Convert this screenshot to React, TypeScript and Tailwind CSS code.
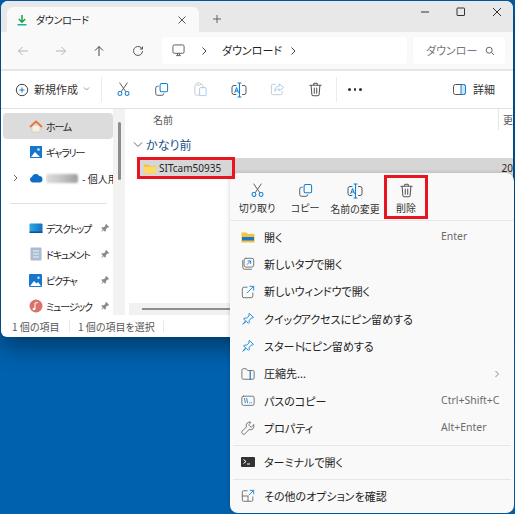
import React from "react";

const F = "[font-family:'Noto_Sans_CJK_JP','Noto_Sans',sans-serif] [font-feature-settings:'palt']";

function Ic({ children, size = 15, className = "" }: { children: React.ReactNode; size?: number; className?: string }) {
  return (
    <svg width={size} height={size} viewBox="0 0 16 16" fill="none" strokeLinecap="round" strokeLinejoin="round" className={"shrink-0 " + className}>
      {children}
    </svg>
  );
}

const Scissors = () => (
  <Ic>
    <path d="M4 1l6.200 9M12 1L5.800 10" stroke="#555" strokeWidth="1" />
    <circle cx="4.200" cy="12.300" r="2.100" stroke="#0f7fd6" strokeWidth="1.100" />
    <circle cx="11.800" cy="12.300" r="2.100" stroke="#0f7fd6" strokeWidth="1.100" />
  </Ic>
);
const Copy = () => (
  <Ic>
    <rect x="6.500" y="1.500" width="8" height="9" rx="1.800" stroke="#0f7fd6" strokeWidth="1.100" />
    <path d="M4.500 4.500h-.7a2 2 0 0 0-2 2v5.700a2 2 0 0 0 2 2h4.700a2 2 0 0 0 2-1.700" stroke="#555" strokeWidth="1" />
  </Ic>
);
const Rename = () => (
  <Ic size={16}>
    <path d="M5 3.500H3a2 2 0 0 0-2 2v5a2 2 0 0 0 2 2h2M11.500 3.500H13a2 2 0 0 1 2 2v5a2 2 0 0 1-2 2h-1.500" stroke="#555" strokeWidth="1" />
    <path d="M8.500 1v14M7 1h3M7 15h3" stroke="#0f7fd6" strokeWidth="1.100" />
    <path d="M3.800 10.500l1.800-5 1.800 5M4.500 9h2.200" stroke="#0f7fd6" strokeWidth="1" />
  </Ic>
);
const Trash = () => (
  <Ic>
    <path d="M2 3.500h12M6 3.200V2.400a1 1 0 0 1 1-1h2a1 1 0 0 1 1 1v.800M3.300 3.500l.800 9.700a1.700 1.700 0 0 0 1.700 1.400h4.400a1.700 1.700 0 0 0 1.700-1.400l.800-9.700M6.700 6.500v5.500M9.300 6.500v5.500" stroke="#555" strokeWidth="1.100" />
  </Ic>
);
const Pin = () => (
  <svg width="10" height="10" viewBox="0 0 10 10" className="shrink-0">
    <path d="M6 .8l3.200 3.200-1 .6-1 .1-1.300 1.500-.1 1.800-.7.700-1.500-1.500L1 9.200l1.800-2.700L1.300 5l.7-.7 1.800-.1 1.500-1.300.1-1z" fill="#8a8a8a" />
  </svg>
);
const BluePin = () => (
  <Ic size={14}>
    <path d="M9.800 1.800l4.400 4.400-.9.600-1.500.1-2.500 2.700.2 2.400-1 1-2.300-2.300L2 14l3.300-3.800L3 7.900l1-1 2.500.1 2.600-2.500.1-1.600z" stroke="#1a86d9" strokeWidth="1.100" />
  </Ic>
);

function NavItem({ icon, label, pin, active, chevron }: { icon: React.ReactNode; label: React.ReactNode; pin?: boolean; active?: boolean; chevron?: boolean }) {
  return (
    <div className={"relative ml-[2px] flex h-[26px] w-[110px] items-center rounded-[4px] pl-[25px] text-[10px] tracking-[-1.200px] text-[#1f1f1f] " + (active ? "bg-[#dcdcdc]" : "")}>
      {chevron && (
        <span className="absolute left-[9px] top-[7px]">
          <svg width="8" height="12" viewBox="0 0 8 12"><path d="M2 3l3 3-3 3" stroke="#666" fill="none" /></svg>
        </span>
      )}
      <span className="flex w-[15px] shrink-0 justify-center">{icon}</span>
      <span className="ml-[3px] flex-1 overflow-hidden whitespace-nowrap">{label}</span>
      {pin && <span className="mr-[3px]"><Pin /></span>}
    </div>
  );
}

function MenuRow({ icon, label, hint, chevron }: { icon: React.ReactNode; label: string; hint?: string; chevron?: boolean }) {
  return (
    <div className="flex h-[27.300px] items-center pl-[11px] text-[11px] text-[#222] [word-spacing:-4px]">
      <span className="flex w-[14px] shrink-0 justify-center">{icon}</span>
      <span className="ml-[9px] flex-1 whitespace-nowrap">{label}</span>
      {hint && <span className="w-[73px] shrink-0 font-['Noto_Sans',sans-serif] text-[10.500px] text-[#6b6b6b]">{hint}</span>}
      {chevron && <svg width="8" height="10" viewBox="0 0 8 10" className="mr-[13px]"><path d="M2.500 2l3 3-3 3" stroke="#888" fill="none" /></svg>}
    </div>
  );
}

function Tool({ icon, label, w }: { icon: React.ReactNode; label: string; w: string }) {
  return (
    <div className={"flex h-[47px] flex-col items-center pt-[10px] text-[10px] text-[#333] " + w}>
      {icon}
      <span className="mt-[3px] whitespace-nowrap leading-[14px]">{label}</span>
    </div>
  );
}

const Slot = ({ children }: { children: React.ReactNode }) => <span className="flex w-[38.500px] justify-center">{children}</span>;

export default function App() {
  return (
    <div className={"relative h-[514px] w-[515px] overflow-hidden bg-[#0061ae] " + F}>
      {/* Window */}
      <div className="absolute left-px top-px flex h-[336px] w-[512px] flex-col overflow-hidden rounded-t-[7px] rounded-b-[6px] bg-white shadow-[0_8px_26px_rgba(0,0,0,0.45)]">
        {/* Tab bar */}
        <div className="flex h-[31px] shrink-0 items-end bg-[#e8e8e8]">
          <div className="ml-[6px] flex h-[25px] w-[192px] items-center rounded-t-[6px] bg-[#f9f9f9] pl-[9px] text-[10px] tracking-[-0.300px] text-[#1f1f1f]">
            <svg width="12" height="12" viewBox="0 0 12 12"><path d="M6 1v7M2.800 5L6 8.200 9.200 5" stroke="#16a34a" strokeWidth="1.500" fill="none" /><path d="M1.500 10.800h9" stroke="#12b5a0" strokeWidth="1.500" /></svg>
            <span className="ml-[8px] flex-1">ダウンロード</span>
            <svg width="10" height="10" viewBox="0 0 10 10" className="mr-[12px]"><path d="M1.500 1.500l7 7M8.500 1.500l-7 7" stroke="#444" strokeWidth="0.900" /></svg>
          </div>
          <svg width="10" height="10" viewBox="0 0 10 10" className="ml-[13px] mb-[8px]"><path d="M5 1v8M1 5h8" stroke="#555" strokeWidth="0.900" /></svg>
          <div className="ml-auto flex h-full items-start">
            <svg width="10" height="10" viewBox="0 0 10 10" className="mr-[26px] mt-[6px]"><path d="M1 5h8" stroke="#333" /></svg>
            <svg width="10" height="10" viewBox="0 0 10 10" className="mr-[26px] mt-[6px]"><rect x="1" y="1" width="7.500" height="7.500" rx="0.500" stroke="#333" fill="none" /></svg>
            <svg width="10" height="10" viewBox="0 0 10 10" className="mr-[11px] mt-[6px]"><path d="M1 1l8 8M9 1l-8 8" stroke="#333" /></svg>
          </div>
        </div>
        {/* Nav bar */}
        <div className="flex h-[39px] shrink-0 items-center border-b-2 border-[#e5e5e5] bg-[#f9f9f9]">
          <svg width="12" height="12" viewBox="0 0 12 12" className="ml-[16px]"><path d="M11 6H1.500M5.500 2l-4 4 4 4" stroke="#b5b5b5" fill="none" /></svg>
          <svg width="12" height="12" viewBox="0 0 12 12" className="ml-[26px]"><path d="M1 6h9.500M6.500 2l4 4-4 4" stroke="#b5b5b5" fill="none" /></svg>
          <svg width="12" height="12" viewBox="0 0 12 12" className="ml-[26px]"><path d="M6 11V1.500M2 5.500l4-4 4 4" stroke="#444" fill="none" /></svg>
          <svg width="12" height="12" viewBox="0 0 12 12" className="ml-[27px]"><path d="M10.500 6a4.500 4.500 0 1 1-1.300-3.200L10.500 4M10.500 1.500V4H8" stroke="#555" fill="none" /></svg>
          <div className="ml-[18px] flex h-[27px] w-[245px] items-center rounded-[4px] bg-white pl-[10px] text-[11px] text-[#1f1f1f]">
            <svg width="13" height="13" viewBox="0 0 14 14"><rect x="1" y="1" width="12" height="9" rx="1.500" stroke="#555" fill="none" /><path d="M4.500 12.500h5M6 10v2M8 10v2" stroke="#555" /></svg>
            <svg width="7" height="10" viewBox="0 0 7 10" className="ml-[16px]"><path d="M1.500 1.500L5 5 1.500 8.500" stroke="#444" fill="none" /></svg>
            <span className="ml-[14px] w-[54px] whitespace-nowrap">ダウンロード</span>
            <svg width="7" height="10" viewBox="0 0 7 10" className="ml-[14px]"><path d="M1.500 1.500L5 5 1.500 8.500" stroke="#444" fill="none" /></svg>
          </div>
          <div className="ml-[6px] flex h-[27px] w-[92px] items-center rounded-[4px] bg-white pl-[13px] text-[11px] text-[#777]">
            <span className="flex-1 whitespace-nowrap">ダウンロー</span>
            <svg width="10" height="10" viewBox="0 0 10 10" className="mr-[10px]"><circle cx="4.200" cy="4.200" r="3" stroke="#666" fill="none" /><path d="M6.500 6.500L9 9" stroke="#666" /></svg>
          </div>
        </div>
        {/* Toolbar */}
        <div className="flex h-[38px] shrink-0 items-center border-b border-[#e2e2e2] bg-white text-[11px] text-[#333]">
          <div className="flex w-[100px] shrink-0 items-center pl-[14px]">
            <svg width="14" height="14" viewBox="0 0 14 14"><circle cx="7" cy="7" r="5.700" stroke="#444" fill="none" /><path d="M7 4.500v5M4.500 7h5" stroke="#0f7fd6" /></svg>
            <span className="ml-[5px] whitespace-nowrap">新規作成</span>
            <svg width="7" height="6" viewBox="0 0 7 6" className="ml-[5px] mb-[2px]"><path d="M1 1.500l2.500 2.500L6 1.500" stroke="#999" fill="none" /></svg>
          </div>
          <div className="h-[25px] w-px bg-[#ececec]" />
          <div className="ml-[2px] flex">
            <Slot><Scissors /></Slot>
            <Slot><Copy /></Slot>
            <Slot>
              <svg width="15" height="15" viewBox="0 0 16 16" fill="none" className="opacity-40"><rect x="2" y="2.500" width="8.500" height="11.500" rx="1.500" stroke="#777" /><rect x="7" y="6" width="7" height="8.500" rx="1.200" stroke="#0f7fd6" fill="#fff" /><rect x="4" y="1" width="4" height="2.500" rx="1" stroke="#777" fill="#fff" /></svg>
            </Slot>
            <Slot><Rename /></Slot>
            <Slot>
              <svg width="15" height="15" viewBox="0 0 16 16" fill="none" className="opacity-40"><path d="M6 2.500H3a1.500 1.500 0 0 0-1.500 1.500v8A1.500 1.500 0 0 0 3 13.500h8.500A1.500 1.500 0 0 0 13 12V9.500" stroke="#777" /><path d="M10 2l4.500 3.800L10 9.500V7.500c-2.500 0-4 .8-5 2.500 0-3.500 2-5.500 5-5.800z" stroke="#0f7fd6" /></svg>
            </Slot>
            <Slot><Trash /></Slot>
          </div>
          <div className="ml-[1px] h-[25px] w-px bg-[#ececec]" />
          <span className="ml-[11px] flex gap-[3px]">
            <i className="h-[2.500px] w-[2.500px] rounded-full bg-[#333]" />
            <i className="h-[2.500px] w-[2.500px] rounded-full bg-[#333]" />
            <i className="h-[2.500px] w-[2.500px] rounded-full bg-[#333]" />
          </span>
          <span className="ml-auto mr-[18px] flex items-center">
            <svg width="13" height="11" viewBox="0 0 13 11" className="mr-[7px]"><rect x="0.500" y="0.500" width="12" height="10" rx="2" stroke="#555" fill="none" /><path d="M8 .500h2.500a2 2 0 0 1 2 2v6a2 2 0 0 1-2 2H8z" fill="#cfe6f9" stroke="#0f7fd6" /></svg>
            詳細
          </span>
        </div>
        {/* Main */}
        <div className="flex min-h-0 flex-1">
          <div className="w-[112px] shrink-0 pt-[4px]">
            <NavItem active label="ホーム" icon={<svg width="14" height="13" viewBox="0 0 14 13"><path d="M3 6v6h8V6" fill="#f5f0e8" stroke="#d9c7a8" strokeWidth="0.700" /><path d="M1 7l6-5.500L13 7" stroke="#e8743b" strokeWidth="1.700" fill="none" /></svg>} />
            <NavItem label="ギャラリー" icon={<svg width="14" height="14" viewBox="0 0 14 14"><rect x="1" y="1" width="12" height="12" fill="#1677cf" /><path d="M2 12l4-5 5 5z" fill="#fff" /><circle cx="9.500" cy="4.500" r="1.300" fill="#cfe9ff" /></svg>} />
            <NavItem
              chevron
              label={
                <span className="flex items-center">
                  <span className="mr-[4px] inline-block h-[9px] w-[32px] shrink-0 rounded-[2px] bg-gradient-to-r from-[#ddd] via-[#c4c4c4] to-[#9e9e9e] blur-[1px]" />
                  <span className="tracking-normal">- 個人用</span>
                </span>
              }
              icon={<svg width="14" height="10" viewBox="0 0 14 10"><path d="M3.500 9.500a3 3 0 0 1-.5-5.800 4 4 0 0 1 7.300-.700A3.300 3.300 0 0 1 11 9.500z" fill="#0f6fc6" /></svg>}
            />
            <div className="ml-[9px] mt-[12px] mb-[11px] h-px w-[97px] bg-[#e0e0e0]" />
            <NavItem pin label="デスクトップ" icon={<svg width="14" height="11" viewBox="0 0 14 11"><defs><linearGradient id="dg" x1="0" y1="0" x2="1" y2="0"><stop offset="0" stopColor="#2fa8e0" /><stop offset="1" stopColor="#1470c4" /></linearGradient></defs><rect x="0.500" y="0.500" width="13" height="9" rx="1" fill="url(#dg)" /><rect x="0.500" y="8.500" width="13" height="1.500" fill="#0b4f94" /></svg>} />
            <NavItem pin label="ドキュメント" icon={<svg width="12" height="14" viewBox="0 0 12 14"><rect x="0.500" y="0.500" width="11" height="13" rx="1" fill="#a9bcd0" /><path d="M3 4h6M3 7h6M3 10h6" stroke="#eef3f8" /></svg>} />
            <NavItem pin label="ピクチャ" icon={<svg width="13" height="13" viewBox="0 0 13 13"><rect width="13" height="13" rx="1" fill="#1677cf" /><path d="M1 12l4-5 2.500 2.500L9 8l3 4z" fill="#fff" /><circle cx="9.500" cy="3.800" r="1.200" fill="#cfe9ff" /></svg>} />
            <NavItem pin label="ミュージック" icon={<svg width="14" height="14" viewBox="0 0 14 14"><circle cx="7" cy="7" r="6.500" fill="#d9736a" /><path d="M6 10V4l3-.500" stroke="#fff" fill="none" /><circle cx="5" cy="10" r="1.300" fill="#fff" /></svg>} />
          </div>
          {/* Sidebar scroll strip */}
          <div className="relative h-full w-[12px] shrink-0 bg-[#f2f2f2]">
            <div className="absolute left-[5px] top-[13px] h-[58px] w-[2.500px] rounded-full bg-[#8d8d8d]" />
          </div>
          {/* Content */}
          <div className="relative min-w-0 flex-1">
            <div className="flex h-[21px] items-center pl-[28px] text-[10px] text-[#555]">名前</div>
            <div className="flex h-[27px] items-center pl-[8px] pt-[3px] text-[12px] text-[#1b4f8a]">
              <svg width="10" height="8" viewBox="0 0 10 8" className="mr-[3px]"><path d="M1 1.500l4 4 4-4" stroke="#666" fill="none" /></svg>
              かなり前
            </div>
            <div className="ml-[14px] mt-px flex h-[21px] items-center bg-[#d6d6d6] pl-[4px] text-[10px] text-[#1f1f1f]">
              <svg width="14" height="12" viewBox="0 0 14 12" className="mr-[2px]"><path d="M1 1.500h4.500l1.500 1.500h6v7.500H1z" fill="#f4c23f" /><path d="M1 3.800h12v6.700H1z" fill="#fcd968" /></svg>
              <span className="font-['Noto_Sans',sans-serif]">SITcam50935</span>
              <span className="ml-auto font-['Noto_Sans',sans-serif]">20</span>
            </div>
            <div className="absolute right-0 top-0 h-[21px] w-[15px] overflow-hidden whitespace-nowrap border-l border-[#e5e5e5] pl-[4px] text-[10px] leading-[21px] text-[#555]">更</div>
            <div className="absolute bottom-0 left-[4px] right-0 h-[12px] bg-[#f1f1f1]">
              <div className="absolute left-[13px] right-0 top-[5px] h-[2px] bg-[#8d8d8d]" />
            </div>
          </div>
        </div>
        {/* Status */}
        <div className="flex h-[22px] shrink-0 items-center pl-[11px] text-[10px] text-[#555]">
          <span className="w-[48px] whitespace-nowrap">1 個の項目</span>
          <span className="ml-[9px] h-[12px] w-px bg-[#e8e8e8]" />
          <span className="ml-[8px] whitespace-nowrap">1 個の項目を選択</span>
          <span className="ml-[8px] h-[12px] w-px bg-[#e8e8e8]" />
        </div>
      </div>

      {/* Context menu */}
      <div className="absolute left-[230px] top-[173px] h-[340px] w-[284px] rounded-[8px] bg-[#f9f9f9] shadow-[0_0_4px_rgba(0,0,0,0.2)]">
        <div className="relative flex h-[48px] border-b border-[#e8e8e8] pl-[3px]">
          <Tool w="w-[48px]" icon={<Scissors />} label="切り取り" />
          <Tool w="w-[48px]" icon={<Copy />} label="コピー" />
          <Tool w="w-[52px]" icon={<Rename />} label="名前の変更" />
          <Tool w="w-[50px]" icon={<Trash />} label="削除" />
          <div className="absolute left-[154px] top-[2px] h-[44px] w-[44px] border-[3px] border-[#e8141f]" />
        </div>
        <div className="pt-[2.500px]">
          <MenuRow label="開く" hint="Enter" icon={<svg width="14" height="12" viewBox="0 0 14 12"><path d="M.500 1.500h5l1.500 1.500h6.500v8.500H.500z" fill="#f4c23f" /><rect x="1" y="6" width="12" height="3.500" fill="#1677cf" /></svg>} />
          <MenuRow label="新しいタブで開く" icon={<Ic size={14}><rect x="3.500" y="1.500" width="11" height="10" rx="2" stroke="#666" /><path d="M2 4v8a2 2 0 0 0 2 2h8" stroke="#666" /><path d="M7 8.500l4-4M8 4.500h3v3" stroke="#0f7fd6" /></Ic>} />
          <MenuRow label="新しいウィンドウで開く" icon={<Ic size={14}><path d="M7 2.500H3.500a2 2 0 0 0-2 2v8a2 2 0 0 0 2 2h8a2 2 0 0 0 2-2V9" stroke="#666" /><path d="M7 9l7-7M10 1.500h4.500V6" stroke="#0f7fd6" /></Ic>} />
          <MenuRow label="クイック アクセスにピン留めする" icon={<BluePin />} />
          <MenuRow label="スタート にピン留めする" icon={<BluePin />} />
          <MenuRow label="圧縮先..." chevron icon={<Ic size={14}><path d="M1 3.500a1.500 1.500 0 0 1 1.500-1.500H6l1.500 2h6A1.500 1.500 0 0 1 15 5.500v7a1.500 1.500 0 0 1-1.500 1.500h-11A1.500 1.500 0 0 1 1 12.500z" stroke="#666" /><path d="M10.500 5v9" stroke="#0f7fd6" strokeWidth="1.500" strokeDasharray="1.500 1" /></Ic>} />
          <MenuRow label="パスのコピー" hint="Ctrl+Shift+C" icon={<Ic size={14}><rect x="1" y="2.500" width="14" height="10.500" rx="2" stroke="#666" /><path d="M4 5l1 5M6.500 5l1 5" stroke="#0f7fd6" /><path d="M10 10h.100M12 10h.100" stroke="#0f7fd6" /></Ic>} />
          <MenuRow label="プロパティ" hint="Alt+Enter" icon={<Ic size={14}><path d="M14.500 4.500l-2.800 2.800-3-3L11.500 1.500A4 4 0 0 0 6.200 6.700L1.500 11.500a2 2 0 0 0 3 3L9.300 9.800a4 4 0 0 0 5.200-5.300z" stroke="#666" /></Ic>} />
        </div>
        <div className="mx-[3px] mt-[3px] h-px bg-[#e6e6e6]" />
        <div className="pt-[2.500px]">
          <MenuRow label="ターミナルで開く" icon={<svg width="14" height="12" viewBox="0 0 14 12"><rect y="1" width="14" height="10" rx="1" fill="#333" /><path d="M2.500 3.500L5 5.500 2.500 7.500M6 8h3" stroke="#fff" fill="none" /></svg>} />
        </div>
        <div className="mx-[3px] mt-[3px] h-px bg-[#e6e6e6]" />
        <div className="pt-[2.500px]">
          <MenuRow label="その他のオプションを確認" icon={<Ic size={14}><path d="M7 2H3a1.500 1.500 0 0 0-1.500 1.500v9A1.500 1.500 0 0 0 3 14h9a1.500 1.500 0 0 0 1.500-1.500V9M1.500 8h6.500v6" stroke="#666" /><path d="M9 7l5-5M10.500 1.500h4v4" stroke="#0f7fd6" /></Ic>} />
        </div>
      </div>

      {/* Red callout on file, above the menu edge */}
      <div className="absolute left-[137px] top-[157px] h-[22px] w-[98px] border-[3px] border-[#e8141f]" />
    </div>
  );
}
